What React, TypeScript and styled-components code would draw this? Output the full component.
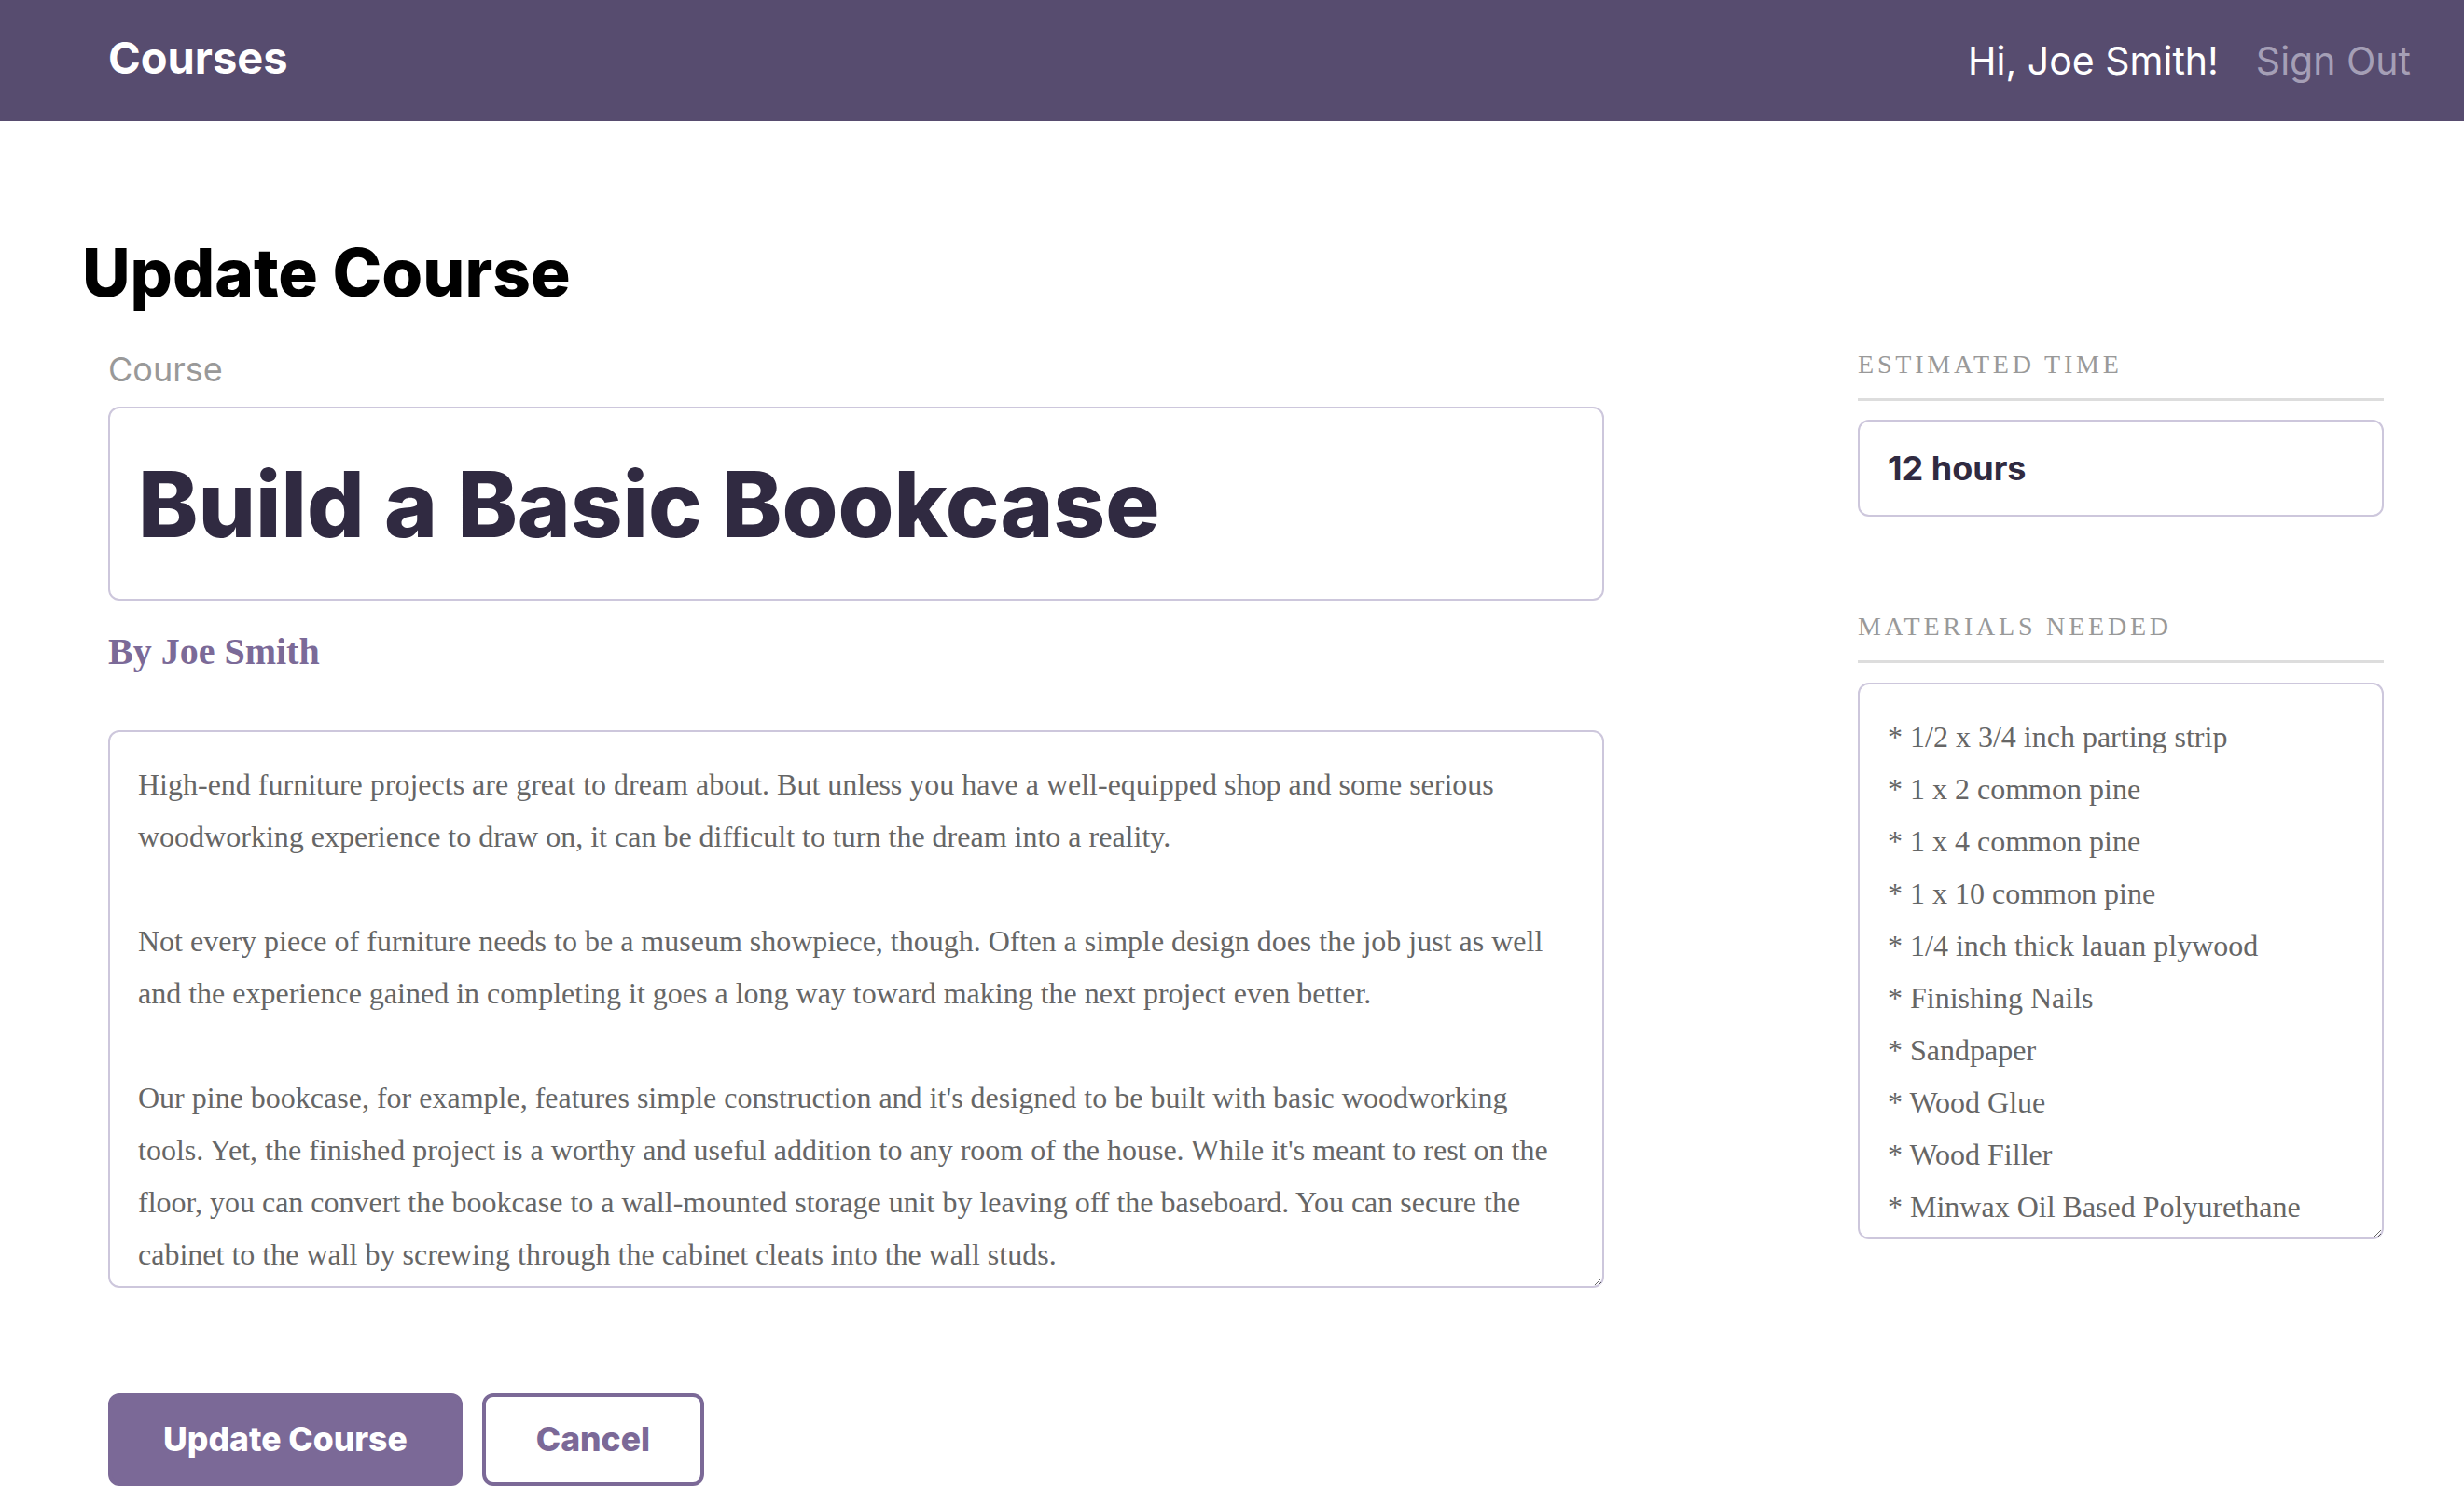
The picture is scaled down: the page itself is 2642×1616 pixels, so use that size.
import React from "react";
import styled, { createGlobalStyle } from "styled-components";

const GlobalStyle = createGlobalStyle`
  * { box-sizing: border-box; }
  html, body { margin: 0; padding: 0; background: #ffffff; }
  body { font-family: "Inter", "Liberation Sans", sans-serif; color: #000; }
`;

const sans = `"Inter", "Liberation Sans", sans-serif`;
const serif = `"Liberation Serif", "Times New Roman", serif`;

const Header = styled.header`
  height: 130px;
  background: #574c6f;
  display: flex;
  align-items: center;
  justify-content: space-between;
  padding: 0 57px 0 116px;
`;

const Logo = styled.div`
  font-family: ${sans};
  font-weight: 700;
  font-size: 47px;
  line-height: 60px;
  color: #ffffff;
  margin-top: -6px;
`;

const Nav = styled.nav`
  display: flex;
  align-items: center;
  gap: 40px;
`;

const NavText = styled.span<{ $muted?: boolean }>`
  font-family: ${sans};
  font-weight: 400;
  font-size: 41px;
  line-height: 50px;
  color: ${(p) => (p.$muted ? "#a59fb6" : "#ffffff")};
`;

const Main = styled.main`
  padding: 122px 86px 0 88px;
`;

const PageTitle = styled.h1`
  margin: 0;
  font-family: ${sans};
  font-weight: 800;
  font-size: 71px;
  line-height: 80px;
  color: #000;
`;

const Form = styled.form`
  display: flex;
  flex-direction: column;
  padding-left: 28px;
`;

const Columns = styled.div`
  display: flex;
  justify-content: space-between;
  align-items: flex-start;
  margin-top: 44px;
`;

const MainColumn = styled.div`
  width: 1604px;
  display: flex;
  flex-direction: column;
`;

const FieldLabel = styled.label`
  font-family: ${sans};
  font-size: 36px;
  line-height: 40px;
  color: #999999;
`;

const TitleInput = styled.input`
  margin-top: 20px;
  height: 208px;
  width: 100%;
  border: 2px solid #cdc7dc;
  border-radius: 12px;
  padding: 0 30px;
  font-family: ${sans};
  font-weight: 800;
  font-size: 97px;
  color: #302a41;
  background: #fff;
  outline: none;
`;

const Byline = styled.p`
  margin: 31px 0 0;
  font-family: ${serif};
  font-weight: 700;
  font-size: 40px;
  line-height: 48px;
  color: #7b6a98;
`;

const TextArea = styled.textarea<{ $height: number; $padRight: number }>`
  display: block;
  width: 100%;
  height: ${(p) => p.$height}px;
  border: 2px solid #cdc7dc;
  border-radius: 12px;
  padding: 28px ${(p) => p.$padRight}px 5px 30px;
  font-family: ${serif};
  font-size: 32px;
  line-height: 56px;
  color: #666666;
  background: #fff;
  outline: none;
  overflow: hidden;
`;

const DescriptionArea = styled(TextArea)`
  margin-top: 60px;
`;

const SideColumn = styled.aside`
  width: 564px;
  display: flex;
  flex-direction: column;
  gap: 103px;
`;

const SideGroup = styled.div`
  display: flex;
  flex-direction: column;
`;

const SideLabel = styled.label`
  font-family: ${serif};
  font-size: 28px;
  line-height: 30px;
  letter-spacing: 3.8px;
  text-transform: uppercase;
  color: #999999;
  padding-bottom: 21px;
  border-bottom: 3px solid #dddddd;
`;

const TimeInput = styled.input`
  margin-top: 20px;
  height: 104px;
  width: 100%;
  border: 2px solid #cdc7dc;
  border-radius: 12px;
  padding: 0 30px;
  font-family: ${sans};
  font-weight: 700;
  font-size: 36px;
  color: #302a41;
  background: #fff;
  outline: none;
`;

const MaterialsArea = styled(TextArea)`
  margin-top: 21px;
`;

const Actions = styled.div`
  display: flex;
  gap: 21px;
  margin-top: 113px;
  padding-bottom: 24px;
`;

const Button = styled.button<{ $outline?: boolean }>`
  height: 99px;
  padding: 0 ${(p) => (p.$outline ? 54 : 55)}px;
  border-radius: 12px;
  border: 4px solid #7b6997;
  background: ${(p) => (p.$outline ? "#ffffff" : "#7b6997")};
  color: ${(p) => (p.$outline ? "#7b6997" : "#ffffff")};
  font-family: ${sans};
  font-weight: 800;
  font-size: 35.5px;
  cursor: pointer;
`;

const description = `High-end furniture projects are great to dream about. But unless you have a well-equipped shop and some serious woodworking experience to draw on, it can be difficult to turn the dream into a reality.

Not every piece of furniture needs to be a museum showpiece, though. Often a simple design does the job just as well and the experience gained in completing it goes a long way toward making the next project even better.

Our pine bookcase, for example, features simple construction and it's designed to be built with basic woodworking tools. Yet, the finished project is a worthy and useful addition to any room of the house. While it's meant to rest on the floor, you can convert the bookcase to a wall-mounted storage unit by leaving off the baseboard. You can secure the cabinet to the wall by screwing through the cabinet cleats into the wall studs.`;

const materials = [
  "* 1/2 x 3/4 inch parting strip",
  "* 1 x 2 common pine",
  "* 1 x 4 common pine",
  "* 1 x 10 common pine",
  "* 1/4 inch thick lauan plywood",
  "* Finishing Nails",
  "* Sandpaper",
  "* Wood Glue",
  "* Wood Filler",
  "* Minwax Oil Based Polyurethane",
].join("\n");

export default function App() {
  return (
    <>
      <GlobalStyle />
      <Header>
        <Logo>Courses</Logo>
        <Nav>
          <NavText>Hi, Joe Smith!</NavText>
          <NavText $muted>Sign Out</NavText>
        </Nav>
      </Header>
      <Main>
        <PageTitle>Update Course</PageTitle>
        <Form onSubmit={(e) => e.preventDefault()}>
          <Columns>
            <MainColumn>
              <FieldLabel htmlFor="courseTitle">Course</FieldLabel>
              <TitleInput id="courseTitle" defaultValue="Build a Basic Bookcase" />
              <Byline>By Joe Smith</Byline>
              <DescriptionArea
                $height={598}
                $padRight={40}
                defaultValue={description}
              />
            </MainColumn>
            <SideColumn>
              <SideGroup>
                <SideLabel htmlFor="estimatedTime">Estimated Time</SideLabel>
                <TimeInput id="estimatedTime" defaultValue="12 hours" />
              </SideGroup>
              <SideGroup>
                <SideLabel htmlFor="materialsNeeded">Materials Needed</SideLabel>
                <MaterialsArea
                  id="materialsNeeded"
                  $height={597}
                  $padRight={30}
                  defaultValue={materials}
                />
              </SideGroup>
            </SideColumn>
          </Columns>
          <Actions>
            <Button type="submit">Update Course</Button>
            <Button type="button" $outline>
              Cancel
            </Button>
          </Actions>
        </Form>
      </Main>
    </>
  );
}
